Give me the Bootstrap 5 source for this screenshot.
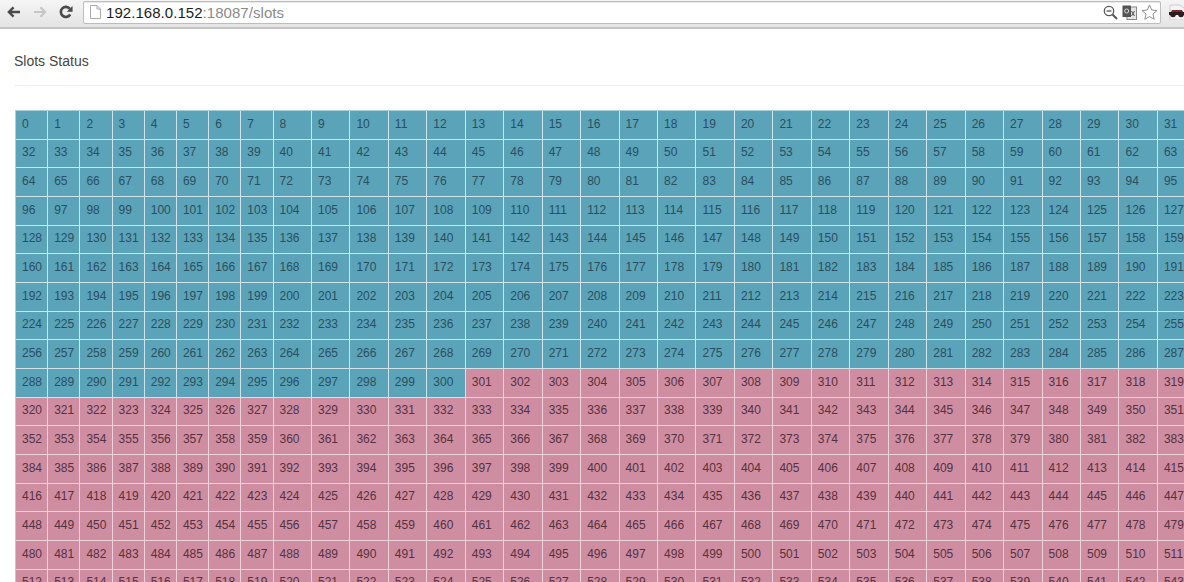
<!DOCTYPE html>
<html lang="en">
<head>
  <meta charset="UTF-8">
  <meta name="viewport" content="width=device-width, initial-scale=1.0">
  <title>Slots Status</title>
  <link href="https://cdn.jsdelivr.net/npm/bootstrap@5.3.2/dist/css/bootstrap.min.css" rel="stylesheet">
  <style>
    html, body {
      height: 582px;
      overflow: hidden;
    }
    body {
      font-family: "Liberation Sans", Arial, sans-serif;
      font-size: 12px;
      color: #333;
      background-color: #fff;
    }
    .browser-bar {
      height: 29px;
      padding: 1px 0 4px 7px;
      background: linear-gradient(#f5f5f5, #e4e4e4);
      border-bottom: 2px solid #c4c4c4;
      width: 1184px;
    }
    .nav-icons {
      width: 76px;
      gap: 12px;
    }
    .address-box {
      width: 1078px;
      height: 23px;
      padding: 0 2px 0 6px;
      background-color: #fff;
      border: 1px solid #bdbdbd;
      border-radius: 2px;
      box-shadow: inset 0 1px 1px #e8e8e8;
    }
    .address-text {
      margin-left: 5px;
      font-size: 15px;
      line-height: 21px;
      letter-spacing: .05px;
      color: #1d1d1d;
    }
    .address-text span {
      color: #8a8a8a;
    }
    .zoom-icon {
      margin-right: 4px;
    }
    .translate-icon {
      margin-right: 4px;
    }
    .ext-icon {
      margin-left: 8px;
    }
    .page-body {
      padding: 24px 0 0 15px;
    }
    .page-title {
      font-size: 14px;
      line-height: 16px;
      margin: 0 0 24px;
      padding-bottom: 16px;
      border-bottom: 1px solid #eee;
      width: 1169px;
      font-weight: 400;
      text-indent: -1px;
      color: #444;
    }
    .slot-grid {
      display: grid;
      grid-template-columns: repeat(8, 32.2px) repeat(24, 38.46px);
      grid-auto-rows: 28.67px;
      width: max-content;
      border-top: 1px solid #a8d0dc;
      border-left: 1px solid #a8d0dc;
    }
    .slot-cell {
      display: flex;
      align-items: center;
      padding: 0 0 2px 6px;
      border-right: 1px solid #cfe3e9;
      border-bottom: 1px solid #cfe3e9;
      line-height: 16px;
      white-space: nowrap;
      overflow: hidden;
    }
    .slot-on {
      background-color: #5aa3b9;
      color: #2b4f5e;
    }
    .slot-off {
      background-color: #cf8da2;
      color: #55323f;
      border-color: #ecd3db;
    }
  </style>
</head>
<body>
  <!-- Browser toolbar -->
  <div class="browser-bar d-flex align-items-center">
    <div class="nav-icons d-flex align-items-center flex-shrink-0">
      <svg width="14" height="12" viewBox="0 0 15 14"><path d="M7 1.500 1.500 7 7 12.500M2 7h12.500" fill="none" stroke="#4a4a4a" stroke-width="2.800"/></svg>
      <svg width="14" height="12" viewBox="0 0 15 14"><path d="M8 1.500 13.500 7 8 12.500M13 7H.5" fill="none" stroke="#c6c6c6" stroke-width="2.600"/></svg>
      <svg width="14" height="14" viewBox="0 0 15 15"><path d="M12 10.200A5.400 5.400 0 1 1 11.600 4" fill="none" stroke="#4a4a4a" stroke-width="2.800"/><path d="M14.500 1v6.200H8.300z" fill="#4a4a4a"/></svg>
    </div>
    <div class="address-box d-flex align-items-center flex-shrink-0">
      <svg width="11" height="14" viewBox="0 0 11 14"><path d="M.5.5h6.500l3.500 3.500v9.500H.5zM7 .5V4h3.500" fill="#fff" stroke="#a9a9a9"/></svg>
      <div class="address-text">192.168.0.152<span>:18087/slots</span></div>
      <div class="ms-auto d-flex align-items-center">
        <svg class="zoom-icon" width="15" height="15" viewBox="0 0 15 15"><circle cx="6" cy="6" r="4.700" fill="none" stroke="#555" stroke-width="1.300"/><path d="M3.500 6h5" stroke="#555" stroke-width="1.300"/><path d="M9.500 9.500 14 14" stroke="#555" stroke-width="2"/></svg>
        <svg class="translate-icon" width="15" height="15" viewBox="0 0 15 15"><rect x="5" y="2" width="9.500" height="12.500" fill="#e4e4e4" stroke="#888"/><rect x=".5" y=".5" width="8.500" height="11.500" fill="#555"/><circle cx="4.700" cy="6" r="2" fill="none" stroke="#ddd"/><path d="M9.500 6l3 5M12.500 6l-3 5" stroke="#555"/></svg>
        <svg width="17" height="16" viewBox="0 0 17 16"><path d="M8.500 1l2.200 5 5.300.5-4 3.500 1.200 5.300-4.700-2.800-4.700 2.800L5 10 1 6.500 6.300 6z" fill="#fff" stroke="#8c8c8c"/></svg>
      </div>
    </div>
    <svg class="ext-icon flex-shrink-0" width="16" height="16" viewBox="0 0 16 16"><path d="M1 1h10l5 4v11H1z" fill="#f4f4f4" stroke="#ccc"/><path d="M0 8h16v3H0z" fill="#2b1d1d"/><circle cx="4" cy="10.500" r="2.800" fill="#2b1d1d"/><circle cx="12" cy="10.500" r="2.800" fill="#2b1d1d"/><path d="M3 6h10l1 2H2z" fill="#7a2a2a"/></svg>
  </div>

  <!-- Slots -->
  <div class="page-body">
    <h1 class="page-title">Slots Status</h1>
    <div class="slot-grid" id="slot-grid"></div>
  </div>

  <script src="https://cdn.jsdelivr.net/npm/bootstrap@5.3.2/dist/js/bootstrap.bundle.min.js"></script>
  <script>
    document.addEventListener('DOMContentLoaded', function() {
      const perRow = 32;
      const rowCount = 17;
      const lastOnSlot = 300;
      const grid = document.getElementById('slot-grid');

      for (let slot = 0; slot < perRow * rowCount; slot++) {
        const cell = document.createElement('div');
        cell.textContent = slot;
        cell.className = 'slot-cell ' + (slot <= lastOnSlot ? 'slot-on' : 'slot-off');
        grid.appendChild(cell);
      }
    });
  </script>
</body>
</html>
